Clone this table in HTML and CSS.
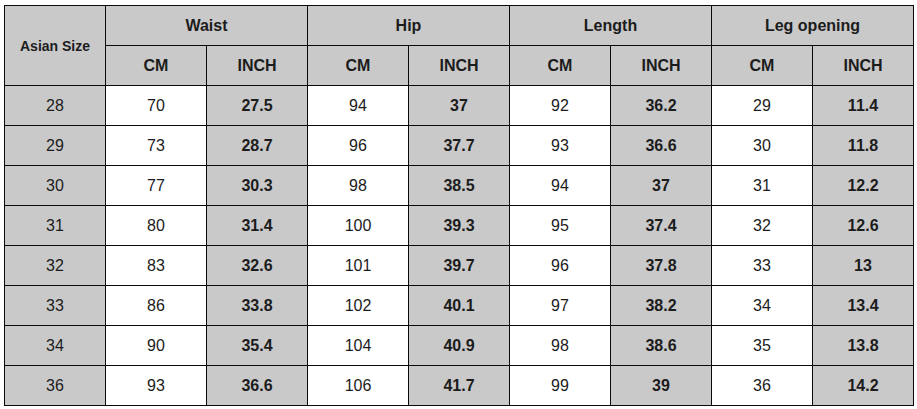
FILE: index.html
```html
<!DOCTYPE html>
<html>
<head>
<meta charset="utf-8">
<link rel="stylesheet" href="styles.css">
</head>
<body>
<div class="page">
  <div class="chart">
    <div class="cell head size">Asian Size</div>
    <div class="cell head group">Waist</div>
    <div class="cell head group">Hip</div>
    <div class="cell head group">Length</div>
    <div class="cell head group">Leg opening</div>
    <div class="cell head">CM</div><div class="cell head">INCH</div>
    <div class="cell head">CM</div><div class="cell head">INCH</div>
    <div class="cell head">CM</div><div class="cell head">INCH</div>
    <div class="cell head">CM</div><div class="cell head">INCH</div>

    <div class="cell sz">28</div><div class="cell cm">70</div><div class="cell in">27.5</div><div class="cell cm">94</div><div class="cell in">37</div><div class="cell cm">92</div><div class="cell in">36.2</div><div class="cell cm">29</div><div class="cell in">11.4</div>
    <div class="cell sz">29</div><div class="cell cm">73</div><div class="cell in">28.7</div><div class="cell cm">96</div><div class="cell in">37.7</div><div class="cell cm">93</div><div class="cell in">36.6</div><div class="cell cm">30</div><div class="cell in">11.8</div>
    <div class="cell sz">30</div><div class="cell cm">77</div><div class="cell in">30.3</div><div class="cell cm">98</div><div class="cell in">38.5</div><div class="cell cm">94</div><div class="cell in">37</div><div class="cell cm">31</div><div class="cell in">12.2</div>
    <div class="cell sz">31</div><div class="cell cm">80</div><div class="cell in">31.4</div><div class="cell cm">100</div><div class="cell in">39.3</div><div class="cell cm">95</div><div class="cell in">37.4</div><div class="cell cm">32</div><div class="cell in">12.6</div>
    <div class="cell sz">32</div><div class="cell cm">83</div><div class="cell in">32.6</div><div class="cell cm">101</div><div class="cell in">39.7</div><div class="cell cm">96</div><div class="cell in">37.8</div><div class="cell cm">33</div><div class="cell in">13</div>
    <div class="cell sz">33</div><div class="cell cm">86</div><div class="cell in">33.8</div><div class="cell cm">102</div><div class="cell in">40.1</div><div class="cell cm">97</div><div class="cell in">38.2</div><div class="cell cm">34</div><div class="cell in">13.4</div>
    <div class="cell sz">34</div><div class="cell cm">90</div><div class="cell in">35.4</div><div class="cell cm">104</div><div class="cell in">40.9</div><div class="cell cm">98</div><div class="cell in">38.6</div><div class="cell cm">35</div><div class="cell in">13.8</div>
    <div class="cell sz">36</div><div class="cell cm">93</div><div class="cell in">36.6</div><div class="cell cm">106</div><div class="cell in">41.7</div><div class="cell cm">99</div><div class="cell in">39</div><div class="cell cm">36</div><div class="cell in">14.2</div>
  </div>
</div>
</body>
</html>
```

FILE: styles.css
```css
html, body {
  margin: 0;
  padding: 0;
  background: #ffffff;
}

.page {
  padding: 5px 0 0 4px;
}

.chart {
  display: grid;
  grid-template-columns: repeat(9, 100px);
  grid-template-rows: repeat(10, 39px);
  gap: 1px;
  padding: 1px;
  background: #0a0a0a;
  width: max-content;
  font-family: "Liberation Sans", Arial, sans-serif;
  font-size: 16px;
  color: #1c1c1c;
}

.cell {
  display: flex;
  align-items: center;
  justify-content: center;
  background: #c9c9c9;
}

.head {
  font-weight: bold;
}

.size {
  grid-row: span 2;
  font-size: 14px;
}

.group {
  grid-column: span 2;
}

.cm {
  background: #ffffff;
}

.in {
  font-weight: bold;
}
```
